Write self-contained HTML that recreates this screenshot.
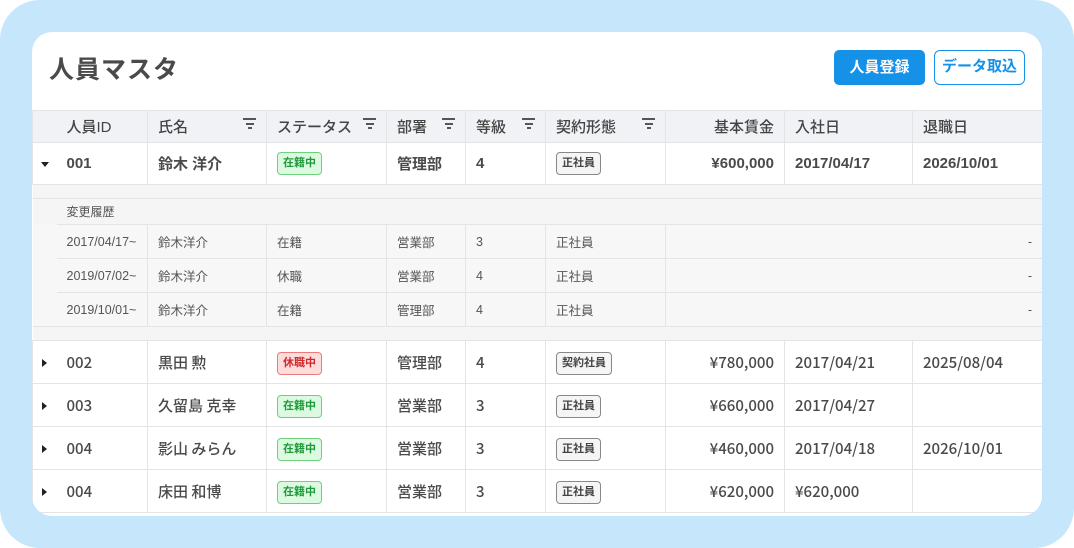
<!DOCTYPE html>
<html><head><meta charset="utf-8"><style>
*{box-sizing:border-box;margin:0;padding:0}
html,body{width:1074px;height:548px;overflow:hidden;background:#fff}
body{font-family:"Liberation Sans","Noto Sans CJK JP",sans-serif;color:#444}
.outer{position:absolute;left:0;top:0;width:1074px;height:548px;background:#c5e6fb;border-radius:40px}
.card{position:absolute;left:32px;top:32px;width:1010px;height:484px;background:#fff;border-radius:20px;overflow:hidden}
h1{position:absolute;left:17px;top:18px;font-size:25px;font-weight:700;color:#4a4a4a;letter-spacing:1px}
.btn1{position:absolute;left:802px;top:18px;width:91px;height:35px;background:#1591e8;color:#fff;border-radius:5px;font-size:15px;font-weight:700;text-align:center;line-height:35px}
.btn2{position:absolute;left:902px;top:18px;width:91px;height:35px;background:#fff;color:#1591e8;border:1.5px solid #1591e8;border-radius:6px;font-size:15px;font-weight:700;text-align:center;line-height:32px}
table{position:absolute;left:0;top:78px;border-collapse:collapse;table-layout:fixed;width:1010px}
td{border:1px solid #e4e4e4;padding:0 10px;white-space:nowrap;font-size:15px;font-weight:500;color:#4a4a4a}
tr.h td{background:#f0f2f5;height:32px;font-size:15px;font-weight:500;color:#444}
tr.m td{height:43px;background:#fff;font-family:"Noto Sans CJK JP","Liberation Sans",sans-serif;font-weight:500}
tr.b td{font-weight:700;height:42px;font-family:"Liberation Sans","Noto Sans CJK JP",sans-serif}
tr.s td{height:14px;background:#f5f5f5;border-left:none;border-right:none}
tr.c td{height:26px;background:#f5f5f5;font-size:12px;font-weight:400;color:#555;border:none}
tr.r td{height:34px;background:#f7f7f7;font-size:12.5px;font-weight:400;color:#555}
td.x{border-right:none;padding:0;text-align:center}
td.id{border-left:none}
.dn{display:inline-block;width:0;height:0;border-left:4px solid transparent;border-right:4px solid transparent;border-top:5px solid #222;vertical-align:middle}
.rt2{display:inline-block;width:0;height:0;border-top:4px solid transparent;border-bottom:4px solid transparent;border-left:5px solid #222;vertical-align:middle}
.f{float:right;width:13px;margin-top:2px}
.f i{display:block;height:2px;background:#555;margin:0 auto 2.5px}
.tag{display:inline-block;font-size:11px;font-weight:700;padding:0 5px;height:23px;line-height:21px;border-radius:4px;border:1px solid;font-family:"Liberation Sans","Noto Sans CJK JP",sans-serif}
.g{background:#dcfadf;border-color:#6fd07e;color:#1f9a3a}
.rd{background:#fddcdc;border-color:#ec7b7b;color:#d0282c}
.k{background:#f5f5f5;border-color:#888;color:#444}
.rt{text-align:right}
</style></head><body>
<div class="outer"></div>
<div class="card">
<h1>人員マスタ</h1>
<div class="btn1">人員登録</div>
<div class="btn2">データ取込</div>
<table>
<colgroup><col style="width:24px"><col style="width:91px"><col style="width:119px"><col style="width:120px"><col style="width:79px"><col style="width:80px"><col style="width:120px"><col style="width:119px"><col style="width:128px"><col style="width:130px"></colgroup>
<tr class="h"><td class="x"></td><td class="id">人員ID</td><td>氏名<span class="f"><i style="width:13px"></i><i style="width:8px"></i><i style="width:4px"></i></span></td><td>ステータス<span class="f"><i style="width:13px"></i><i style="width:8px"></i><i style="width:4px"></i></span></td><td>部署<span class="f"><i style="width:13px"></i><i style="width:8px"></i><i style="width:4px"></i></span></td><td>等級<span class="f"><i style="width:13px"></i><i style="width:8px"></i><i style="width:4px"></i></span></td><td>契約形態<span class="f"><i style="width:13px"></i><i style="width:8px"></i><i style="width:4px"></i></span></td><td class="rt">基本賃金</td><td>入社日</td><td>退職日</td></tr>
<tr class="m b"><td class="x"><span class="dn"></span></td><td class="id">001</td><td>鈴木 洋介</td><td><span class="tag g">在籍中</span></td><td>管理部</td><td>4</td><td><span class="tag k">正社員</span></td><td class="rt">¥600,000</td><td>2017/04/17</td><td>2026/10/01</td></tr>
<tr class="s"><td colspan="10"></td></tr>
<tr class="c"><td></td><td colspan="9" style="padding-left:10px">変更履歴</td></tr>
<tr class="r"><td class="x" style="border:none"></td><td class="id">2017/04/17~</td><td>鈴木洋介</td><td>在籍</td><td>営業部</td><td>3</td><td>正社員</td><td colspan="3" class="rt">-</td></tr>
<tr class="r"><td class="x" style="border:none"></td><td class="id">2019/07/02~</td><td>鈴木洋介</td><td>休職</td><td>営業部</td><td>4</td><td>正社員</td><td colspan="3" class="rt">-</td></tr>
<tr class="r"><td class="x" style="border:none"></td><td class="id">2019/10/01~</td><td>鈴木洋介</td><td>在籍</td><td>管理部</td><td>4</td><td>正社員</td><td colspan="3" class="rt">-</td></tr>
<tr class="s"><td colspan="10"></td></tr>
<tr class="m"><td class="x"><span class="rt2"></span></td><td class="id">002</td><td>黒田 勲</td><td><span class="tag rd">休職中</span></td><td>管理部</td><td>4</td><td><span class="tag k">契約社員</span></td><td class="rt">¥780,000</td><td>2017/04/21</td><td>2025/08/04</td></tr>
<tr class="m"><td class="x"><span class="rt2"></span></td><td class="id">003</td><td>久留島 克幸</td><td><span class="tag g">在籍中</span></td><td>営業部</td><td>3</td><td><span class="tag k">正社員</span></td><td class="rt">¥660,000</td><td>2017/04/27</td><td></td></tr>
<tr class="m"><td class="x"><span class="rt2"></span></td><td class="id">004</td><td>影山 みらん</td><td><span class="tag g">在籍中</span></td><td>営業部</td><td>3</td><td><span class="tag k">正社員</span></td><td class="rt">¥460,000</td><td>2017/04/18</td><td>2026/10/01</td></tr>
<tr class="m"><td class="x"><span class="rt2"></span></td><td class="id">004</td><td>床田 和博</td><td><span class="tag g">在籍中</span></td><td>営業部</td><td>3</td><td><span class="tag k">正社員</span></td><td class="rt">¥620,000</td><td>¥620,000</td><td></td></tr>
</table>
</div>
</body></html>
